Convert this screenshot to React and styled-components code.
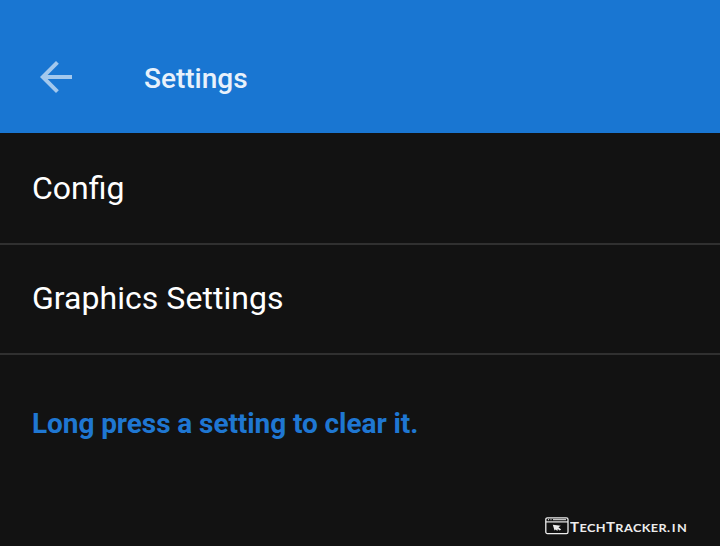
import React from "react";
import styled, { createGlobalStyle } from "styled-components";

const GlobalStyle = createGlobalStyle`
  body { margin: 0; background: #121212; }
`;

const Screen = styled.main`
  display: flex;
  flex-direction: column;
  box-sizing: border-box;
  width: 720px;
  height: 546px;
  overflow: hidden;
  background: #121212;
  color: #fff;
  font-family: Roboto, sans-serif;
`;

const AppBar = styled.header`
  display: flex;
  align-items: center;
  flex: none;
  box-sizing: border-box;
  height: 133px;
  padding: 21px 32px 0;
  background: #1976d2;
`;

const BackButton = styled.button`
  display: block;
  width: 48px;
  height: 48px;
  padding: 0;
  border: 0;
  background: none;
  color: #a3c8ed;
  svg { display: block; }
`;

const Title = styled.h1`
  margin: 3px 0 0 64px;
  font-size: 28px;
  line-height: 36px;
  font-weight: 500;
  color: #e8f1fb;
`;

const Row = styled.div`
  flex: none;
  box-sizing: border-box;
  height: ${(p) => p.$height}px;
  padding: ${(p) => p.$top}px 32px 0;
  border-bottom: 2px solid #303030;
  font-size: 32px;
  line-height: 40px;
  letter-spacing: ${(p) => p.$tracking || "normal"};
`;

const Hint = styled.p`
  margin: 51px 32px 0;
  font-size: 28px;
  line-height: 36px;
  font-weight: 700;
  letter-spacing: -0.08px;
  color: #1f77d2;
`;

const Watermark = styled.footer`
  display: flex;
  align-items: flex-start;
  margin: auto 0 11px 545px;
  color: #ededed;
  svg { display: block; flex: none; }
`;

const Brand = styled.span`
  margin: 3px 0 0 1px;
  font-family: Lato, sans-serif;
  font-size: 11px;
  line-height: 14px;
  font-weight: 700;
  white-space: nowrap;
  letter-spacing: 0.35px;
  transform: scaleX(1.155);
  transform-origin: left;
`;

const Initial = styled.span`
  font-size: 13px;
`;

const Domain = styled.span`
  letter-spacing: 1.3px;
`;

const BackIcon = () => (
  <svg width="48" height="48" viewBox="0 0 24 24" fill="currentColor">
    <path d="M20 11H7.83l5.59-5.59L12 4l-8 8 8 8 1.41-1.41L7.83 13H20z" />
  </svg>
);

const BrowserIcon = () => (
  <svg width="24" height="18" viewBox="0 0 24 18" fill="none" stroke="currentColor">
    <rect x="0.8" y="0.8" width="22.2" height="15.8" rx="1.6" strokeWidth="1.3" />
    <path d="M1 4.9H23" strokeWidth="1.2" />
    <path d="M3 2.7h1M5.5 2.7h1M8 2.7h13" strokeWidth="1" />
    <path d="M7.8 7.8l8 .9-2.3 1.5 2.7 2.2-1.5 1.2-1.9-1.5-.4 1.9-1.7-1.5-1.2 1.1z" fill="currentColor" stroke="none" />
  </svg>
);

export default function App() {
  return (
    <>
      <GlobalStyle />
      <Screen>
        <AppBar>
          <BackButton aria-label="Back"><BackIcon /></BackButton>
          <Title>Settings</Title>
        </AppBar>
        <Row $height={112} $top={35}>Config</Row>
        <Row $height={110} $top={33} $tracking="0.04px">Graphics Settings</Row>
        <Hint>Long press a setting to clear it.</Hint>
        <Watermark>
          <BrowserIcon />
          <Brand><Initial>T</Initial>ECH<Initial>T</Initial>RACKER<Domain>.IN</Domain></Brand>
        </Watermark>
      </Screen>
    </>
  );
}
